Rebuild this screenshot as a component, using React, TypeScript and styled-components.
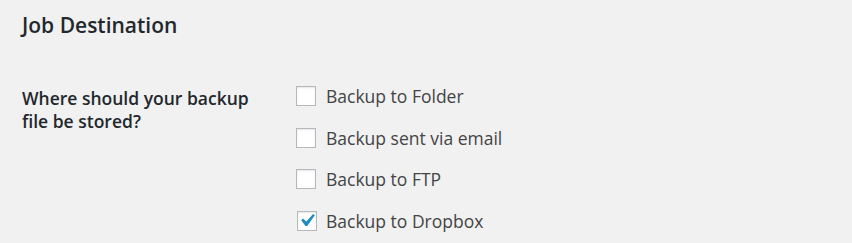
import React from "react";
import styled, { createGlobalStyle } from "styled-components";

const Global = createGlobalStyle`
  html, body { margin: 0; padding: 0; background: #f1f1f1; }
  body { font-family: "Open Sans", "Liberation Sans", sans-serif; color: #444; }
`;

const Page = styled.div`
  width: 852px;
  height: 243px;
  box-sizing: border-box;
  padding: 0 22px;
  overflow: hidden;
`;

const Heading = styled.h2`
  margin: 0;
  padding-top: 11px;
  font-size: 21px;
  line-height: 29px;
  font-weight: 600;
  color: #23282d;
`;

const FormRow = styled.div`
  display: grid;
  grid-template-columns: 274px 1fr;
  margin-top: 46px;
`;

const Label = styled.div`
  font-size: 17.5px;
  line-height: 22.5px;
  font-weight: 600;
  color: #23282d;
  padding-top: 1px;
`;

const Options = styled.div`
  display: flex;
  flex-direction: column;
  gap: 21.7px;
`;

const Option = styled.label`
  display: flex;
  align-items: center;
  gap: 10px;
  height: 20px;
  font-size: 17.5px;
  color: #444;
`;

const Box = styled.span<{ $checked?: boolean }>`
  width: 20px;
  height: 20px;
  box-sizing: border-box;
  border: 1px solid #b4b9be;
  background: #fff;
  box-shadow: inset 0 1px 2px rgba(0, 0, 0, 0.1);
  display: flex;
  align-items: center;
  justify-content: center;
  flex: none;
  margin-left: ${(p) => (p.$checked ? "1px" : "0")};
  margin-right: ${(p) => (p.$checked ? "-1px" : "0")};
`;

const CheckSvg = styled.svg`
  width: 14px;
  height: 12px;
  margin-top: -3px;
  margin-left: 1px;
`;

const Check = () => (
  <CheckSvg viewBox="5.6 4.8 10.7 9.5" preserveAspectRatio="none">
    <path
      d="M14.83 4.89l1.34.94-5.81 8.38H9.02L5.78 9.67l1.34-1.25 2.57 2.4z"
      fill="#1e8cbe"
    />
  </CheckSvg>
);

const items = [
  { label: "Backup to Folder", checked: false },
  { label: "Backup sent via email", checked: false },
  { label: "Backup to FTP", checked: false },
  { label: "Backup to Dropbox", checked: true },
];

export default function App() {
  return (
    <Page>
      <Global />
      <Heading>Job Destination</Heading>
      <FormRow>
        <Label>
          Where should your backup
          <br />
          file be stored?
        </Label>
        <Options>
          {items.map((it) => (
            <Option key={it.label}>
              <Box $checked={it.checked}>{it.checked && <Check />}</Box>
              {it.label}
            </Option>
          ))}
        </Options>
      </FormRow>
    </Page>
  );
}
